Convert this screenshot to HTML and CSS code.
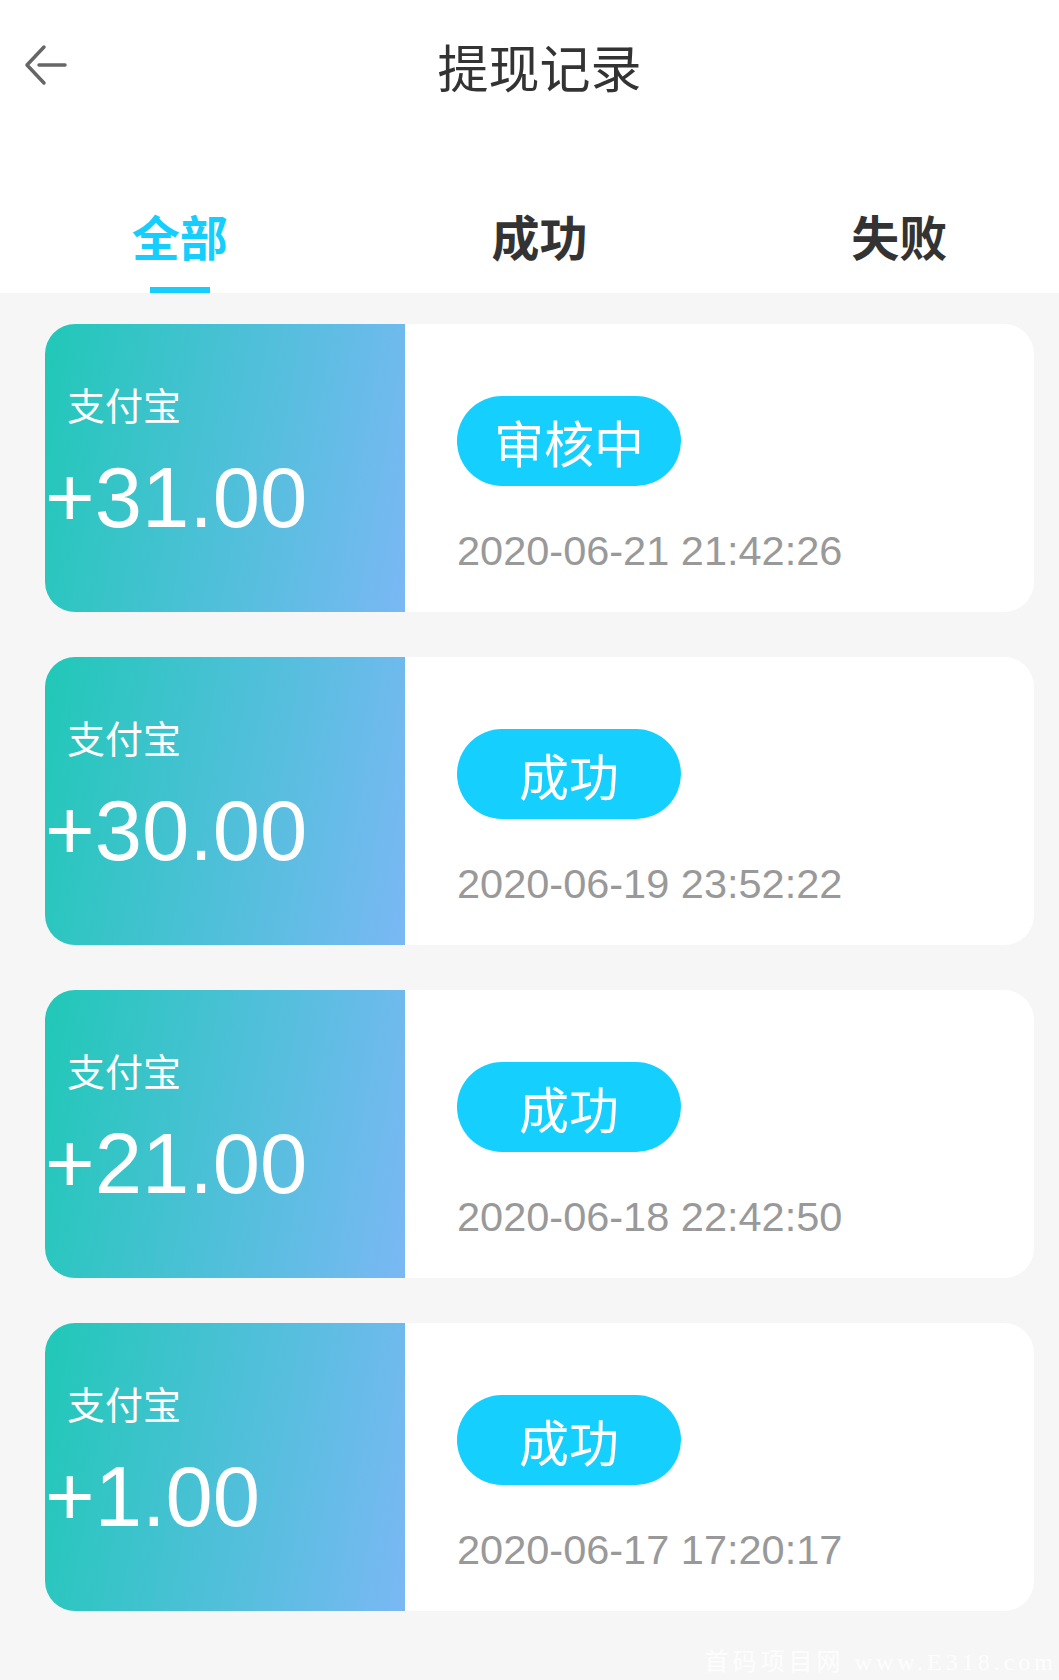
FILE: index.html
```html
<!DOCTYPE html>
<html lang="zh-CN">
<head>
    <meta charset="UTF-8">
    <meta name="viewport" content="width=device-width, initial-scale=1.0">
    <title>提现记录</title>
    <link rel="stylesheet" href="styles.css">
</head>
<body>
    <div class="app">
        <header class="header">
            <div class="topbar">
                <a class="back" href="#">
                    <svg width="48" height="48" viewBox="0 0 48 48">
                        <path d="M20 3 L3 21 L20 39" fill="none" stroke="#666" stroke-width="3.5" stroke-linecap="round" stroke-linejoin="round"/>
                        <path d="M15 21 H41" fill="none" stroke="#666" stroke-width="3.5" stroke-linecap="round"/>
                    </svg>
                </a>
                <h1 class="title">提现记录</h1>
            </div>
            <nav class="tabs">
                <a class="tab active" href="#">全部<span class="bar"></span></a>
                <a class="tab" href="#">成功<span class="bar"></span></a>
                <a class="tab" href="#">失败<span class="bar"></span></a>
            </nav>
        </header>

        <main class="list">
            <div class="card">
                <div class="amount-box">
                    <div class="method">支付宝</div>
                    <div class="amount">+31.00</div>
                </div>
                <div class="info">
                    <span class="status">审核中</span>
                    <div class="date">2020-06-21 21:42:26</div>
                </div>
            </div>
            <div class="card">
                <div class="amount-box">
                    <div class="method">支付宝</div>
                    <div class="amount">+30.00</div>
                </div>
                <div class="info">
                    <span class="status">成功</span>
                    <div class="date">2020-06-19 23:52:22</div>
                </div>
            </div>
            <div class="card">
                <div class="amount-box">
                    <div class="method">支付宝</div>
                    <div class="amount">+21.00</div>
                </div>
                <div class="info">
                    <span class="status">成功</span>
                    <div class="date">2020-06-18 22:42:50</div>
                </div>
            </div>
            <div class="card">
                <div class="amount-box">
                    <div class="method">支付宝</div>
                    <div class="amount">+1.00</div>
                </div>
                <div class="info">
                    <span class="status">成功</span>
                    <div class="date">2020-06-17 17:20:17</div>
                </div>
            </div>
        </main>

        <footer class="watermark">首码项目网 www.E318.com</footer>
    </div>
</body>
</html>
```

FILE: styles.css
```css
body {
    margin: 0;
    padding: 0;
    background-color: #f6f6f6;
    font-family: "Liberation Sans", "Noto Sans CJK SC", sans-serif;
    color: #333;
    overflow: hidden;
}
.app {
    width: 1079px;
}
.header {
    background-color: #fff;
}
.topbar {
    position: relative;
    height: 132px;
    display: flex;
    align-items: center;
    justify-content: center;
}
.back {
    position: absolute;
    left: 24px;
    top: 44px;
    width: 48px;
    height: 48px;
}
.back svg {
    display: block;
}
.title {
    margin: 0;
    font-family: "Noto Sans CJK SC", sans-serif;
    font-size: 51px;
    font-weight: 400;
    line-height: 60px;
    color: #333;
}
.tabs {
    display: flex;
    height: 161px;
}
.tab {
    flex: 1;
    display: flex;
    flex-direction: column;
    align-items: center;
    padding-top: 73px;
    font-family: "Noto Sans CJK SC", sans-serif;
    font-size: 48px;
    font-weight: 700;
    line-height: 60px;
    color: #333;
    text-decoration: none;
}
.tab .bar {
    width: 60px;
    height: 6px;
    margin-top: 22px;
    background-color: transparent;
}
.tab.active {
    color: #15cefe;
}
.tab.active .bar {
    background-color: #15cefe;
}
.list {
    display: flex;
    flex-direction: column;
    gap: 45px;
    padding: 31px 45px 0;
}
.card {
    display: flex;
    height: 288px;
    background-color: #fff;
    border-radius: 30px;
    overflow: hidden;
}
.amount-box {
    width: 360px;
    padding-top: 58px;
    box-sizing: border-box;
    background: linear-gradient(100deg, #20c8b7 0%, #4dc0d8 50%, #7ab8f4 100%);
    color: #fff;
}
.method {
    padding-left: 22px;
    font-family: "Noto Sans CJK SC", sans-serif;
    font-size: 38px;
    line-height: 44px;
}
.amount {
    margin-top: 27px;
    font-size: 85px;
    line-height: 90px;
}
.info {
    flex: 1;
    padding: 72px 0 0 52px;
}
.status {
    display: flex;
    align-items: center;
    justify-content: center;
    width: 224px;
    height: 90px;
    border-radius: 45px;
    background-color: #15cfff;
    color: #fff;
    font-family: "Noto Sans CJK SC", sans-serif;
    font-size: 50px;
}
.date {
    margin-top: 44px;
    font-size: 41.5px;
    line-height: 41px;
    color: #999;
}
.watermark {
    padding: 36px 22px 0 0;
    text-align: right;
    font-family: "Liberation Serif", "Noto Sans CJK SC", serif;
    font-size: 24px;
    line-height: 30px;
    letter-spacing: 4px;
    color: rgba(255, 255, 255, 0.9);
}
```
